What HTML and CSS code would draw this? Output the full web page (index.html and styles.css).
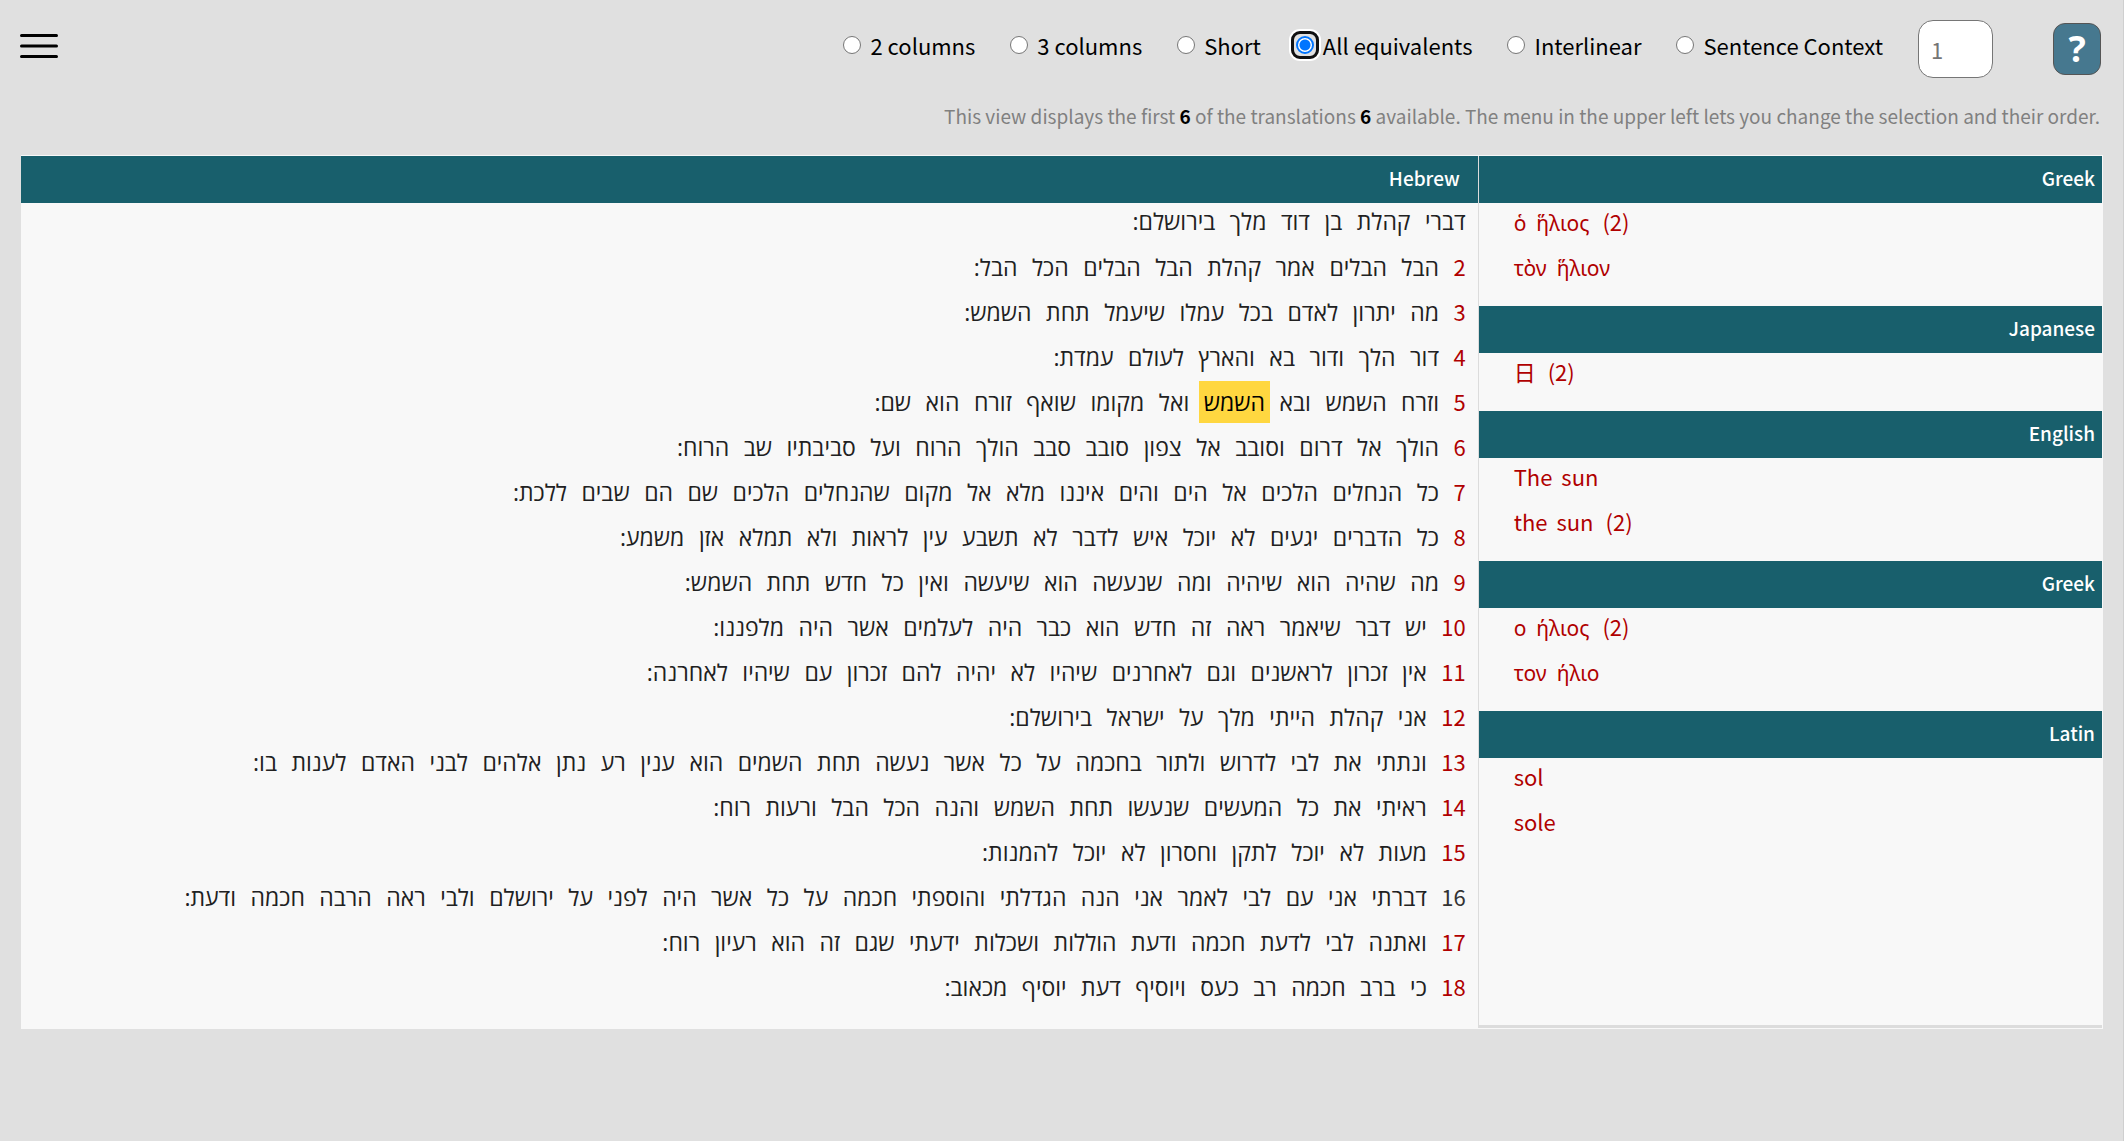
FILE: index.html
```html
<!DOCTYPE html>
<html lang="en">
<head>
<meta charset="utf-8">
<meta name="viewport" content="width=device-width, initial-scale=1">
<title>Ecclesiastes 1: All equivalents</title>
<link rel="stylesheet" href="styles.css">
</head>
<body>
<header class="toolbar">
  <button class="menu" type="button" aria-label="Menu">
    <svg width="38" height="26" viewBox="0 0 38 26" aria-hidden="true"><path d="M1.5 2.5h35M1.5 13h35M1.5 23.5h35" stroke="#000" stroke-width="3" stroke-linecap="round"/></svg>
  </button>
  <form class="views">
    <label class="view"><input type="radio" name="view">2 columns</label>
    <label class="view"><input type="radio" name="view">3 columns</label>
    <label class="view"><input type="radio" name="view">Short</label>
    <label class="view"><input type="radio" name="view" checked>All equivalents</label>
    <label class="view"><input type="radio" name="view">Interlinear</label>
    <label class="view"><input type="radio" name="view">Sentence Context</label>
    <input class="chapter" type="text" placeholder="1" aria-label="Chapter">
  </form>
  <button class="help" type="button" aria-label="Help">?</button>
</header>
<p class="notice">This view displays the first <b>6</b> of the translations <b>6</b> available. The menu in the upper left lets you change the selection and their order.</p>
<main class="reader">
  <section class="source">
    <h2 class="bar bar-source">Hebrew</h2>
    <div class="verses" dir="rtl" lang="he">
      <p><span>דברי</span> <span>קהלת</span> <span>בן</span> <span>דוד</span> <span>מלך</span> <span>בירושלם:</span></p>
      <p><a href="#v2">2</a> <span>הבל</span> <span>הבלים</span> <span>אמר</span> <span>קהלת</span> <span>הבל</span> <span>הבלים</span> <span>הכל</span> <span>הבל:</span></p>
      <p><a href="#v3">3</a> <span>מה</span> <span>יתרון</span> <span>לאדם</span> <span>בכל</span> <span>עמלו</span> <span>שיעמל</span> <span>תחת</span> <span>השמש:</span></p>
      <p><a href="#v4">4</a> <span>דור</span> <span>הלך</span> <span>ודור</span> <span>בא</span> <span>והארץ</span> <span>לעולם</span> <span>עמדת:</span></p>
      <p><a href="#v5">5</a> <span>וזרח</span> <span>השמש</span> <span>ובא</span> <span class="selected">השמש</span> <span>ואל</span> <span>מקומו</span> <span>שואף</span> <span>זורח</span> <span>הוא</span> <span>שם:</span></p>
      <p><a href="#v6">6</a> <span>הולך</span> <span>אל</span> <span>דרום</span> <span>וסובב</span> <span>אל</span> <span>צפון</span> <span>סובב</span> <span>סבב</span> <span>הולך</span> <span>הרוח</span> <span>ועל</span> <span>סביבתיו</span> <span>שב</span> <span>הרוח:</span></p>
      <p><a href="#v7">7</a> <span>כל</span> <span>הנחלים</span> <span>הלכים</span> <span>אל</span> <span>הים</span> <span>והים</span> <span>איננו</span> <span>מלא</span> <span>אל</span> <span>מקום</span> <span>שהנחלים</span> <span>הלכים</span> <span>שם</span> <span>הם</span> <span>שבים</span> <span>ללכת:</span></p>
      <p><a href="#v8">8</a> <span>כל</span> <span>הדברים</span> <span>יגעים</span> <span>לא</span> <span>יוכל</span> <span>איש</span> <span>לדבר</span> <span>לא</span> <span>תשבע</span> <span>עין</span> <span>לראות</span> <span>ולא</span> <span>תמלא</span> <span>אזן</span> <span>משמע:</span></p>
      <p><a href="#v9">9</a> <span>מה</span> <span>שהיה</span> <span>הוא</span> <span>שיהיה</span> <span>ומה</span> <span>שנעשה</span> <span>הוא</span> <span>שיעשה</span> <span>ואין</span> <span>כל</span> <span>חדש</span> <span>תחת</span> <span>השמש:</span></p>
      <p><a href="#v10">10</a> <span>יש</span> <span>דבר</span> <span>שיאמר</span> <span>ראה</span> <span>זה</span> <span>חדש</span> <span>הוא</span> <span>כבר</span> <span>היה</span> <span>לעלמים</span> <span>אשר</span> <span>היה</span> <span>מלפננו:</span></p>
      <p><a href="#v11">11</a> <span>אין</span> <span>זכרון</span> <span>לראשנים</span> <span>וגם</span> <span>לאחרנים</span> <span>שיהיו</span> <span>לא</span> <span>יהיה</span> <span>להם</span> <span>זכרון</span> <span>עם</span> <span>שיהיו</span> <span>לאחרנה:</span></p>
      <p><a href="#v12">12</a> <span>אני</span> <span>קהלת</span> <span>הייתי</span> <span>מלך</span> <span>על</span> <span>ישראל</span> <span>בירושלם:</span></p>
      <p><a href="#v13">13</a> <span>ונתתי</span> <span>את</span> <span>לבי</span> <span>לדרוש</span> <span>ולתור</span> <span>בחכמה</span> <span>על</span> <span>כל</span> <span>אשר</span> <span>נעשה</span> <span>תחת</span> <span>השמים</span> <span>הוא</span> <span>ענין</span> <span>רע</span> <span>נתן</span> <span>אלהים</span> <span>לבני</span> <span>האדם</span> <span>לענות</span> <span>בו:</span></p>
      <p><a href="#v14">14</a> <span>ראיתי</span> <span>את</span> <span>כל</span> <span>המעשים</span> <span>שנעשו</span> <span>תחת</span> <span>השמש</span> <span>והנה</span> <span>הכל</span> <span>הבל</span> <span>ורעות</span> <span>רוח:</span></p>
      <p><a href="#v15">15</a> <span>מעות</span> <span>לא</span> <span>יוכל</span> <span>לתקן</span> <span>וחסרון</span> <span>לא</span> <span>יוכל</span> <span>להמנות:</span></p>
      <p><a class="current" href="#v16">16</a> <span>דברתי</span> <span>אני</span> <span>עם</span> <span>לבי</span> <span>לאמר</span> <span>אני</span> <span>הנה</span> <span>הגדלתי</span> <span>והוספתי</span> <span>חכמה</span> <span>על</span> <span>כל</span> <span>אשר</span> <span>היה</span> <span>לפני</span> <span>על</span> <span>ירושלם</span> <span>ולבי</span> <span>ראה</span> <span>הרבה</span> <span>חכמה</span> <span>ודעת:</span></p>
      <p><a href="#v17">17</a> <span>ואתנה</span> <span>לבי</span> <span>לדעת</span> <span>חכמה</span> <span>ודעת</span> <span>הוללות</span> <span>ושכלות</span> <span>ידעתי</span> <span>שגם</span> <span>זה</span> <span>הוא</span> <span>רעיון</span> <span>רוח:</span></p>
      <p><a href="#v18">18</a> <span>כי</span> <span>ברב</span> <span>חכמה</span> <span>רב</span> <span>כעס</span> <span>ויוסיף</span> <span>דעת</span> <span>יוסיף</span> <span>מכאוב:</span></p>
    </div>
  </section>
  <div class="equivalents">
    <section>
      <h2 class="bar">Greek</h2>
      <div class="matches">
        <p><span lang="el">ὁ</span> <span lang="el">ἥλιος</span> <span class="count">(2)</span></p>
        <p><span lang="el">τὸν</span> <span lang="el">ἥλιον</span></p>
      </div>
    </section>
    <section>
      <h2 class="bar">Japanese</h2>
      <div class="matches">
        <p><span lang="ja">日</span> <span class="count">(2)</span></p>
      </div>
    </section>
    <section>
      <h2 class="bar">English</h2>
      <div class="matches">
        <p><span>The</span> <span>sun</span></p>
        <p><span>the</span> <span>sun</span> <span class="count">(2)</span></p>
      </div>
    </section>
    <section>
      <h2 class="bar">Greek</h2>
      <div class="matches">
        <p><span lang="el">ο</span> <span lang="el">ήλιος</span> <span class="count">(2)</span></p>
        <p><span lang="el">τον</span> <span lang="el">ήλιο</span></p>
      </div>
    </section>
    <section>
      <h2 class="bar">Latin</h2>
      <div class="matches">
        <p><span lang="la">sol</span></p>
        <p><span lang="la">sole</span></p>
      </div>
    </section>
  </div>
</main>
</body>
</html>
```
FILE: styles.css
```css
* { box-sizing: border-box; }

body {
  margin: 0;
  min-height: 100vh;
  padding: 20px 20px 20px 21px;
  border-right: 1px solid #cfcfcf;
  background: #e0e0e0;
  color: #000;
  font: 22px/30px "Noto Sans CJK JP", "Noto Sans", sans-serif;
}

p, h2 { margin: 0; }

.toolbar { display: flex; align-items: flex-start; padding-right: 2px; }

.menu {
  margin: 13px auto 0 -1px;
  padding: 0;
  border: 0;
  background: none;
}
.menu svg { display: block; fill: none; }

.views { display: flex; align-items: flex-start; gap: 35px; }
.view { display: flex; gap: 9px; margin-top: 10px; }
.view input {
  position: relative;
  appearance: none;
  width: 18px;
  height: 18px;
  margin: 6px 0 0;
  border: 1px solid #767676;
  border-radius: 50%;
  background: #fff;
}
.view input:checked {
  border: 2px solid #0075ff;
  background: radial-gradient(circle, #0075ff 5px, #fff 6px);
}
.view input:checked::before {
  content: "";
  position: absolute;
  inset: -7px;
  border: 3px solid #101010;
  border-radius: 9px;
  box-shadow: 0 0 0 2px #fff;
}

.chapter {
  width: 75px;
  height: 58px;
  padding: 0 12px;
  border: 1px solid #767676;
  border-radius: 15px;
  background: #fff;
  font: inherit;
}
.chapter::placeholder { color: #757575; opacity: 1; }

.help {
  width: 48px;
  height: 52px;
  margin: 3px 0 0 60px;
  padding: 0;
  border: 1px solid #555;
  border-radius: 12px;
  background: #46788f;
  color: #fff;
  font: bold 36px/46px "Noto Sans", sans-serif;
}

.notice {
  margin: 23px 3px 24px;
  color: #808080;
  font-size: 19px;
  text-align: right;
}
.notice b { color: #000; }

.reader {
  display: grid;
  grid-template-columns: 70% 30%;
  border: 1px solid #f8f8f8;
  border-left: 0;
  background: #f8f8f8;
}

.bar {
  height: 47px;
  padding: 0 7px;
  background: #185f6c;
  color: #fff;
  font-size: 19px;
  font-weight: 500;
  line-height: 44px;
  text-align: right;
}
.bar-source { padding-right: 18px; }

.verses { padding: 0 7px 15px; color: #212121; font-size: 20px; }
.verses p, .matches p { height: 45px; line-height: 36px; }
.verses span, .verses a { padding: 5px; }
.verses span { font-family: "Open Sans", sans-serif; font-size: 23px; }
.verses a { color: #b00000; font-size: 22px; text-decoration: none; }
.verses .current { color: #333; }
.verses .selected { background: #ffd740; color: #000; }

.equivalents { border-left: 1px solid #dcdcdc; border-bottom: 3px solid #dcdcdc; }
.matches { padding: 0 33px 13px; color: #b00000; }
.matches span { padding: 0 2px; }
.matches .count { padding-left: 5px; }
.matches [lang="el"] { padding: 0 3px 0 2px; font-family: "Noto Sans", sans-serif; font-size: 21px; }
```
